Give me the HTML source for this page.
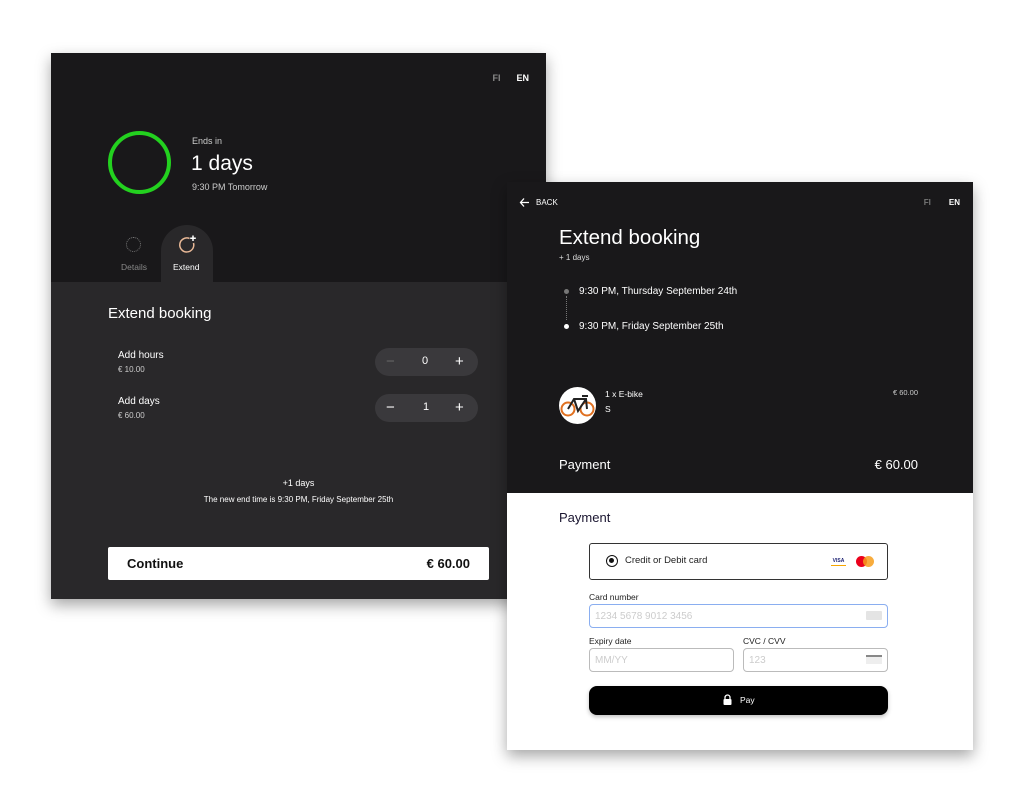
<!DOCTYPE html>
<html><head><meta charset="utf-8"><style>
*{margin:0;padding:0;box-sizing:border-box}
body{width:1036px;height:804px;background:#fff;font-family:"Liberation Sans",sans-serif;position:relative;overflow:hidden;color:#fff}
.abs{position:absolute}
#L{left:51px;top:53px;width:495px;height:546px;background:#19181a;box-shadow:0 6px 14px rgba(0,0,0,.35)}
#Lb{left:0;top:229px;width:495px;height:317px;background:#29282a}
#R{left:507px;top:182px;width:466px;height:568px;background:#fff;box-shadow:0 6px 14px rgba(0,0,0,.35)}
#Rt{left:0;top:0;width:466px;height:311px;background:#19181a}
.stp{width:103px;height:28px;border-radius:14px;background:#3a393c}
.stp span{position:absolute;top:5px;font-size:15px}
.inp{border:1px solid #bbb;border-radius:4px;height:24px;background:#fff;font-size:10px;color:#ccc;padding:6px 5px}
.lab{font-size:8.5px;color:#222}
</style></head><body>
<div id="L" class="abs">
 <div class="abs" style="right:17px;top:20px;font-size:9px;font-weight:bold"><span style="color:#888;margin-right:16px">FI</span>EN</div>
 <div class="abs" style="left:57px;top:78px;width:63px;height:63px;border:4px solid #23d11f;border-radius:50%"></div>
 <div class="abs" style="left:141px;top:83px;font-size:9px;color:#ccc">Ends in</div>
 <div class="abs" style="left:140px;top:99px;font-size:21px">1 days</div>
 <div class="abs" style="left:141px;top:129px;font-size:9px;color:#ccc">9:30 PM Tomorrow</div>
 <div id="Lb" class="abs"></div>
 <div class="abs" style="left:110px;top:172px;width:52px;height:60px;background:#29282a;border-radius:26px 26px 0 0"></div>
 <div class="abs" style="left:75px;top:184px;width:15px;height:15px;border:1px dotted #777;border-radius:50%"></div>
 <div class="abs" style="left:70px;top:209px;font-size:8.5px;color:#888">Details</div>
 <svg class="abs" style="left:126px;top:181px" width="20" height="20" viewBox="0 0 20 20"><path d="M12.5 4.5A7 7 0 1 0 16.5 9" stroke="#e8b896" stroke-width="1.5" fill="none"/><path d="M16 1.5V7M13.2 4.2H18.8" stroke="#fff" stroke-width="1.5"/></svg>
 <div class="abs" style="left:122px;top:209px;font-size:8.5px">Extend</div>
 <div class="abs" style="left:57px;top:252px;font-size:15px">Extend booking</div>
 <div class="abs" style="left:67px;top:297px;font-size:10px">Add hours</div>
 <div class="abs" style="left:67px;top:312px;font-size:8px;color:#ccc">€ 10.00</div>
 <div class="abs" style="left:67px;top:343px;font-size:10px">Add days</div>
 <div class="abs" style="left:67px;top:358px;font-size:8px;color:#ccc">€ 60.00</div>
 <div class="abs stp" style="left:324px;top:295px"><span style="left:11px;color:#666">−</span><span style="left:47px;font-size:11px;top:7px">0</span><span style="left:80px">+</span></div>
 <div class="abs stp" style="left:324px;top:341px"><span style="left:11px">−</span><span style="left:48px;font-size:11px;top:7px">1</span><span style="left:80px">+</span></div>
 <div class="abs" style="left:0;width:495px;top:425px;text-align:center;font-size:9px">+1 days</div>
 <div class="abs" style="left:0;width:495px;top:442px;text-align:center;font-size:8px">The new end time is 9:30 PM, Friday September 25th</div>
 <div class="abs" style="left:57px;top:494px;width:381px;height:33px;background:#fff;border-radius:2px;color:#111;font-size:13px;font-weight:bold"><span class="abs" style="left:19px;top:9px">Continue</span><span class="abs" style="right:19px;top:9px">€ 60.00</span></div>
</div>
<div id="R" class="abs">
 <div id="Rt" class="abs"></div>
 <svg class="abs" style="left:12px;top:15px" width="11" height="11" viewBox="0 0 11 11"><path d="M10 5.5H1.5M5 1.5L1.5 5.5L5 9.5" stroke="#fff" stroke-width="1.3" fill="none"/></svg>
 <div class="abs" style="left:29px;top:16px;font-size:8px">BACK</div>
 <div class="abs" style="right:13px;top:16px;font-size:8px;font-weight:bold"><span style="color:#777;margin-right:18px">FI</span>EN</div>
 <div class="abs" style="left:52px;top:44px;font-size:20.5px">Extend booking</div>
 <div class="abs" style="left:52px;top:71px;font-size:8px;color:#ddd">+ 1 days</div>
 <div class="abs" style="left:57px;top:107px;width:5px;height:5px;border-radius:50%;background:#777"></div>
 <div class="abs" style="left:59px;top:114px;height:24px;border-left:1px dotted #777"></div>
 <div class="abs" style="left:57px;top:142px;width:5px;height:5px;border-radius:50%;background:#fff"></div>
 <div class="abs" style="left:72px;top:104px;font-size:10px">9:30 PM, Thursday September 24th</div>
 <div class="abs" style="left:72px;top:139px;font-size:10px">9:30 PM, Friday September 25th</div>
 <svg class="abs" style="left:52px;top:205px" width="37" height="37" viewBox="0 0 37 37"><circle cx="18.5" cy="18.5" r="18.5" fill="#fff"/><circle cx="9" cy="22" r="6.5" stroke="#e07020" stroke-width="2" fill="none"/><circle cx="28" cy="22" r="6.5" stroke="#e07020" stroke-width="2" fill="none"/><path d="M9 22L15 12H27L28 22M15 12L19 24L27 12M23 9H29" stroke="#222" stroke-width="2" fill="none"/></svg>
 <div class="abs" style="left:98px;top:207px;font-size:8.5px">1 x E-bike</div>
 <div class="abs" style="left:98px;top:222px;font-size:8.5px">S</div>
 <div class="abs" style="right:55px;top:206px;font-size:7.5px;color:#ccc">€ 60.00</div>
 <div class="abs" style="left:52px;top:275px;font-size:13px">Payment</div>
 <div class="abs" style="right:55px;top:275px;font-size:13px">€ 60.00</div>
 <div class="abs" style="left:52px;top:328px;font-size:13px;color:#1a1530">Payment</div>
 <div class="abs" style="left:82px;top:361px;width:299px;height:37px;border:1px solid #333;border-radius:3px;background:#fff"></div>
 <div class="abs" style="left:99px;top:373px;width:12px;height:12px;border:1.5px solid #111;border-radius:50%"><div style="margin:2px;width:5px;height:5px;border-radius:50%;background:#111"></div></div>
 <div class="abs" style="left:118px;top:373px;font-size:9.5px;color:#222">Credit or Debit card</div>
 <div class="abs" style="left:324px;top:376px;width:15px;height:8px;font-size:5px;font-weight:bold;color:#1a1f71;border-bottom:1.5px solid #f7a600;text-align:center">VISA</div>
 <div class="abs" style="left:349px;top:374px;width:11px;height:11px;border-radius:50%;background:#eb001b"></div>
 <div class="abs" style="left:356px;top:374px;width:11px;height:11px;border-radius:50%;background:#f79e1b;opacity:.85"></div>
 <div class="abs lab" style="left:82px;top:410px">Card number</div>
 <div class="abs inp" style="left:82px;top:422px;width:299px;border:1.5px solid #8aaef0">1234 5678 9012 3456</div>
 <div class="abs" style="left:359px;top:429px;width:16px;height:9px;background:#e4e4e4;border-radius:1px"></div>
 <div class="abs lab" style="left:82px;top:454px">Expiry date</div>
 <div class="abs inp" style="left:82px;top:466px;width:145px">MM/YY</div>
 <div class="abs lab" style="left:236px;top:454px">CVC / CVV</div>
 <div class="abs inp" style="left:236px;top:466px;width:145px">123</div>
 <div class="abs" style="left:359px;top:473px;width:16px;height:9px;background:#eee;border-top:2px solid #888"></div>
 <div class="abs" style="left:82px;top:504px;width:299px;height:29px;background:#000;border-radius:8px;box-shadow:0 2px 4px rgba(0,0,0,.25)"></div>
 <svg class="abs" style="left:216px;top:512px" width="9" height="11" viewBox="0 0 9 11"><path d="M2 5V3.5a2.5 2.5 0 0 1 5 0V5" stroke="#fff" stroke-width="1.3" fill="none"/><rect x="0.5" y="5" width="8" height="6" rx="1" fill="#fff"/></svg>
 <div class="abs" style="left:233px;top:513px;font-size:8.5px">Pay</div>
</div>
</body></html>
